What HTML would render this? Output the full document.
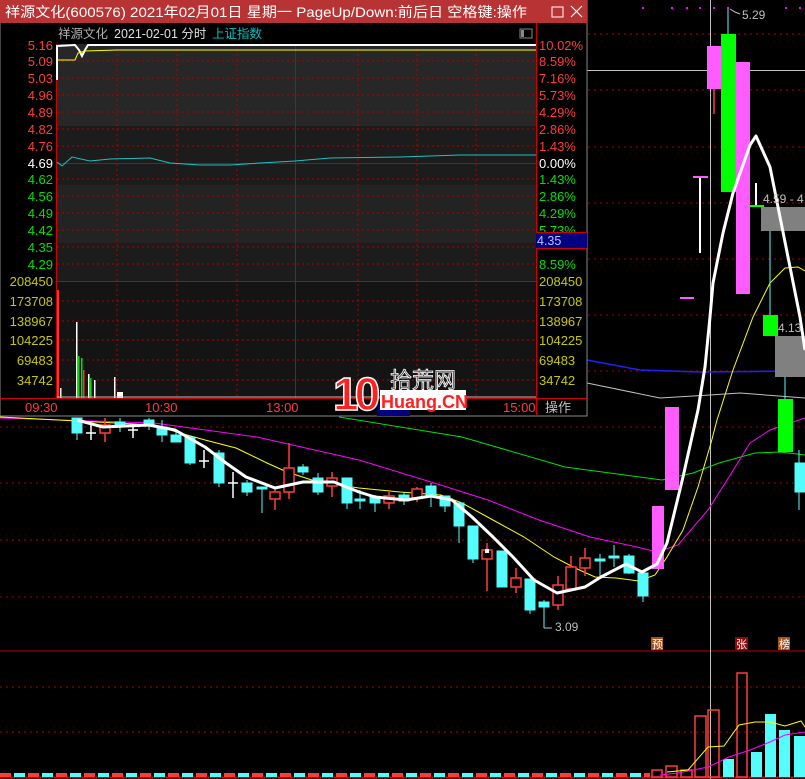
<!DOCTYPE html>
<html><head><meta charset="utf-8"><style>
html,body{margin:0;padding:0;background:#000;width:805px;height:779px;overflow:hidden}
svg{display:block}
text{font-family:"Liberation Sans","Noto Sans CJK SC",sans-serif}
</style></head><body>
<svg width="805" height="779" viewBox="0 0 805 779" xmlns="http://www.w3.org/2000/svg">
<defs>
<pattern id="vb" x="0" y="773" width="28" height="4" patternUnits="userSpaceOnUse">
<rect x="0" y="0" width="11" height="4" fill="#ff3c3c"/><rect x="14" y="0" width="11" height="4" fill="#54fcfc"/>
</pattern>
</defs>
<rect width="805" height="779" fill="#000"/>
<g stroke="#b00000" stroke-dasharray="2,4" stroke-width="1">
<line x1="0" y1="34" x2="805" y2="34"/><line x1="0" y1="90" x2="805" y2="90"/><line x1="0" y1="147" x2="805" y2="147"/>
<line x1="0" y1="203" x2="805" y2="203"/><line x1="0" y1="259" x2="805" y2="259"/><line x1="0" y1="315" x2="805" y2="315"/>
<line x1="0" y1="371" x2="805" y2="371"/><line x1="0" y1="427" x2="805" y2="427"/><line x1="0" y1="483" x2="805" y2="483"/>
<line x1="0" y1="540" x2="805" y2="540"/><line x1="0" y1="597" x2="805" y2="597"/>
<line x1="0" y1="687" x2="805" y2="687"/><line x1="0" y1="732" x2="805" y2="732"/>
</g>
<line x1="0" y1="651" x2="805" y2="651" stroke="#c00000"/>
<line x1="0" y1="777.5" x2="805" y2="777.5" stroke="#d00000" stroke-width="2"/>
<g fill="#ff00ff"><rect x="642" y="7" width="2" height="2"/><rect x="671" y="7" width="2" height="2"/><rect x="686" y="7" width="2" height="2"/><rect x="699" y="7" width="2" height="2"/><rect x="713" y="7" width="2" height="2"/><rect x="727" y="7" width="2" height="2"/><rect x="785" y="7" width="2" height="2"/><rect x="799" y="7" width="2" height="2"/></g>
<line x1="710.5" y1="0" x2="710.5" y2="779" stroke="#c0c0c0"/>
<line x1="587" y1="70.5" x2="805" y2="70.5" stroke="#c0c0c0"/>
<polyline points="587,360 640,370 700,372 805,371" fill="none" stroke="#2020ff" stroke-width="1.5"/>
<polyline points="587,383 660,398 710,395 740,393 805,398" fill="none" stroke="#c0c0c0" stroke-width="1"/>
<polyline points="339,417 462,437 565,467 662,480 693,473 719,463 755,453 780,452 805,455" fill="none" stroke="#00e000"/>
<polyline points="0,418 154,423 257,437 359,460 431,482 488,500 539,520 590,537 637,547 657,552 678,545 708,510 729,477 750,443 770,430 805,418" fill="none" stroke="#ff00ff"/>
<polyline points="0,417 154,425 180,433 205,440 236,448 267,463 287,472 318,482 359,488 400,492 441,495 462,503 493,520 524,537 554,557 575,568 595,577 616,578 639,581 655,575 667,557 683,530 698,487 711,443 717,420 733,370 753,317 770,283 785,268 798,267 805,271" fill="none" stroke="#ffff00"/>
<g stroke="#54fcfc" fill="#54fcfc">
<line x1="77" y1="418" x2="77" y2="440"/><rect x="72" y="418" width="10" height="15"/>
<line x1="120" y1="418" x2="120" y2="432"/><rect x="115" y="422" width="10" height="5"/>
<line x1="149" y1="418" x2="149" y2="430"/><rect x="144" y="420" width="10" height="5"/>
<line x1="162" y1="420" x2="162" y2="442"/><rect x="157" y="427" width="10" height="8"/>
<line x1="176" y1="432" x2="176" y2="442"/><rect x="171" y="435" width="10" height="7"/>
<line x1="190" y1="436" x2="190" y2="465"/><rect x="185" y="437" width="10" height="26"/>
<line x1="219" y1="450" x2="219" y2="487"/><rect x="214" y="453" width="10" height="30"/>
<line x1="247" y1="480" x2="247" y2="496"/><rect x="242" y="483" width="10" height="9"/>
<line x1="262" y1="487" x2="262" y2="513"/><rect x="257" y="487" width="10" height="2"/>
<line x1="303" y1="464" x2="303" y2="475"/><rect x="298" y="467" width="10" height="5"/>
<line x1="318" y1="473" x2="318" y2="495"/><rect x="313" y="478" width="10" height="14"/>
<line x1="347" y1="478" x2="347" y2="509"/><rect x="342" y="478" width="10" height="25"/>
<line x1="360" y1="490" x2="360" y2="509"/><rect x="355" y="499" width="10" height="2"/>
<line x1="375" y1="495" x2="375" y2="512"/><rect x="370" y="497" width="10" height="6"/>
<line x1="404" y1="492" x2="404" y2="505"/><rect x="399" y="495" width="10" height="6"/>
<line x1="431" y1="483" x2="431" y2="507"/><rect x="426" y="486" width="10" height="9"/>
<line x1="445" y1="496" x2="445" y2="512"/><rect x="440" y="496" width="10" height="10"/>
<line x1="459" y1="503" x2="459" y2="543"/><rect x="454" y="503" width="10" height="23"/>
<line x1="473" y1="526" x2="473" y2="563"/><rect x="468" y="526" width="10" height="33"/>
<rect x="497" y="551" width="10" height="36"/>
<line x1="530" y1="579" x2="530" y2="614"/><rect x="525" y="579" width="10" height="31"/>
<line x1="544" y1="600" x2="544" y2="628"/><rect x="539" y="602" width="10" height="5"/>
<line x1="600" y1="554" x2="600" y2="578"/><rect x="595" y="559" width="10" height="2"/>
<line x1="614" y1="545" x2="614" y2="567"/><rect x="609" y="556" width="10" height="2"/>
<line x1="629" y1="554" x2="629" y2="574"/><rect x="624" y="556" width="10" height="17"/>
<line x1="643" y1="570" x2="643" y2="602"/><rect x="638" y="573" width="10" height="23"/>
<line x1="770" y1="231" x2="770" y2="315"/><line x1="785" y1="377" x2="785" y2="399"/>
<line x1="799" y1="450" x2="799" y2="510"/><rect x="795" y="463" width="10" height="29"/>
<line x1="728" y1="9" x2="728" y2="34"/>
</g>
<g stroke="#fff" stroke-width="1.5">
<line x1="86" y1="433" x2="96" y2="433"/><line x1="91" y1="425" x2="91" y2="440"/>
<line x1="128" y1="430" x2="138" y2="430"/><line x1="133" y1="424" x2="133" y2="438"/>
<line x1="199" y1="461" x2="209" y2="461"/><line x1="204" y1="450" x2="204" y2="468"/>
<line x1="228" y1="483" x2="238" y2="483"/><line x1="233" y1="472" x2="233" y2="498"/>
</g>
<g stroke="#ff3c3c" fill="none" stroke-width="1.5">
<line x1="105" y1="418" x2="105" y2="442"/><rect x="100" y="425" width="10" height="8" fill="#000"/>
<line x1="275" y1="487" x2="275" y2="510"/><rect x="270" y="492" width="10" height="7" fill="#000"/>
<line x1="289" y1="443" x2="289" y2="499"/><rect x="284" y="468" width="10" height="24" fill="#000"/>
<line x1="332" y1="472" x2="332" y2="497"/><rect x="327" y="478" width="10" height="8" fill="#000"/>
<line x1="389" y1="492" x2="389" y2="509"/><rect x="384" y="496" width="10" height="7" fill="#000"/>
<line x1="417" y1="487" x2="417" y2="502"/><rect x="412" y="489" width="10" height="9" fill="#000"/>
<line x1="487" y1="543" x2="487" y2="591"/><rect x="482" y="550" width="10" height="9" fill="#000"/>
<line x1="516" y1="568" x2="516" y2="593"/><rect x="511" y="578" width="10" height="9" fill="#000"/>
<line x1="558" y1="576" x2="558" y2="610"/><rect x="553" y="585" width="10" height="20" fill="#000"/>
<line x1="571" y1="556" x2="571" y2="589"/><rect x="566" y="567" width="10" height="22" fill="#000"/>
<line x1="585" y1="548" x2="585" y2="576"/><rect x="580" y="558" width="10" height="10" fill="#000"/>
<line x1="714" y1="89" x2="714" y2="114"/>
</g>
<rect x="485" y="549" width="4" height="4" fill="#fff"/>
<rect x="652" y="506" width="12" height="63" fill="#ff5cff"/>
<rect x="665" y="407" width="14" height="83" fill="#ff5cff"/>
<rect x="680" y="297" width="14" height="2" fill="#ff5cff"/>
<line x1="700" y1="177" x2="700" y2="253" stroke="#fff" stroke-width="2"/><rect x="693" y="176" width="15" height="2" fill="#ff5cff"/>
<rect x="707" y="46" width="14" height="43" fill="#ff5cff"/>
<rect x="721" y="34" width="15" height="158" fill="#00ff00"/>
<rect x="736" y="62" width="14" height="232" fill="#ff5cff"/>
<line x1="756" y1="183" x2="756" y2="206" stroke="#fff" stroke-width="2"/><rect x="750" y="205" width="14" height="2" fill="#00ff00"/>
<rect x="761" y="207" width="44" height="24" fill="#808080"/>
<rect x="763" y="315" width="15" height="21" fill="#00ff00"/>
<rect x="775" y="336" width="30" height="41" fill="#808080"/>
<rect x="778" y="399" width="15" height="53" fill="#00ff00"/>
<polyline points="77,420 103,427 149,425 175,430 205,447 226,463 246,477 275,488 303,482 334,482 359,492 375,497 406,500 431,496 452,500 472,517 493,537 513,557 534,580 557,593 585,587 601,577 626,564 642,572 657,564 667,543 683,477 698,410 705,367 710,317 713,283 723,233 733,193 750,145 756,136 770,167 780,217 790,267 800,317 805,350" fill="none" stroke="#fff" stroke-width="3" stroke-linejoin="round"/>
<g font-size="12" fill="#c0c0c0">
<text x="742" y="19">5.29</text><text x="763" y="203">4.59 - 4</text><text x="778" y="332">4.13</text><text x="555" y="631">3.09</text>
</g>
<polyline points="730,9 735,12 740,14" fill="none" stroke="#c0c0c0"/><polyline points="544,628 552,628" stroke="#c0c0c0"/>
<rect x="651" y="637" width="12" height="13" fill="#a0521c"/><text x="652" y="648" font-size="11" fill="#fff">预</text>
<rect x="735" y="637" width="13" height="13" fill="#8b0a0a"/><text x="736" y="648" font-size="11" fill="#fff">张</text>
<rect x="778" y="637" width="12" height="13" fill="#a0521c"/><text x="779" y="648" font-size="11" fill="#fff">榜</text>
<rect x="0" y="773" width="650" height="4" fill="url(#vb)"/>
<g stroke="#ff3c3c" fill="none" stroke-width="1.5">
<rect x="652" y="770" width="10" height="7"/><rect x="666" y="766" width="11" height="11"/><rect x="681" y="770" width="11" height="7"/>
<rect x="695" y="716" width="11" height="61"/><rect x="708" y="710" width="11" height="67"/><rect x="737" y="673" width="10" height="104"/>
</g>
<g fill="#54fcfc"><rect x="723" y="759" width="11" height="18"/><rect x="751" y="752" width="11" height="25"/><rect x="765" y="714" width="11" height="63"/><rect x="779" y="730" width="11" height="47"/><rect x="794" y="736" width="11" height="41"/></g>
<polyline points="667,772 688,770 708,747 724,746 739,725 755,722 770,722 785,726 801,721 805,727" fill="none" stroke="#ffff00"/>
<polyline points="660,775 678,773 708,767 729,757 750,750 770,742 785,735 805,732" fill="none" stroke="#ff00ff"/>

<rect x="0" y="0" width="587" height="416" fill="#000" stroke="#888"/>
<rect x="0" y="0" width="587" height="23" fill="#b83434"/>
<text x="5" y="17" font-size="14" fill="#fff" textLength="522" lengthAdjust="spacingAndGlyphs">祥源文化(600576) 2021年02月01日 星期一 PageUp/Down:前后日 空格键:操作</text>
<rect x="552" y="7" width="11" height="10" fill="none" stroke="#fff"/>
<path d="M571 6 L582 17 M582 6 L571 17" stroke="#fff" stroke-width="1.2"/>
<text x="58" y="38" font-size="12.5" fill="#b0b0b0">祥源文化</text>
<text x="114" y="38" font-size="12.5" fill="#e0e0e0">2021-02-01 分时</text>
<text x="212" y="38" font-size="12.5" fill="#00c0c0">上证指数</text>
<rect x="520" y="29" width="12" height="9" fill="none" stroke="#888"/><rect x="521" y="30" width="3" height="7" fill="#888"/>
<rect x="57" y="44" width="479" height="237" fill="#1c1c1c"/>
<rect x="57" y="44" width="479" height="82" fill="#272727"/>
<rect x="57" y="185" width="479" height="58" fill="#232323"/>
<rect x="57" y="282" width="479" height="116" fill="#141414"/>
<g stroke="#b00000" stroke-dasharray="2,3">
<line x1="57" y1="61" x2="536" y2="61"/><line x1="57" y1="78" x2="536" y2="78"/><line x1="57" y1="95" x2="536" y2="95"/>
<line x1="57" y1="112" x2="536" y2="112"/><line x1="57" y1="129" x2="536" y2="129"/><line x1="57" y1="146" x2="536" y2="146"/>
<line x1="57" y1="179" x2="536" y2="179"/><line x1="57" y1="196" x2="536" y2="196"/><line x1="57" y1="213" x2="536" y2="213"/>
<line x1="57" y1="230" x2="536" y2="230"/><line x1="57" y1="247" x2="536" y2="247"/><line x1="57" y1="264" x2="536" y2="264"/>
<line x1="57" y1="301" x2="536" y2="301"/><line x1="57" y1="321" x2="536" y2="321"/><line x1="57" y1="340" x2="536" y2="340"/>
<line x1="57" y1="360" x2="536" y2="360"/><line x1="57" y1="380" x2="536" y2="380"/>
<line x1="117" y1="44" x2="117" y2="398"/><line x1="177" y1="44" x2="177" y2="398"/><line x1="237" y1="44" x2="237" y2="398"/>
<line x1="358" y1="44" x2="358" y2="398"/><line x1="417" y1="44" x2="417" y2="398"/><line x1="476" y1="44" x2="476" y2="398"/>
</g>
<line x1="57" y1="163.5" x2="536" y2="163.5" stroke="#c00000"/>
<line x1="57" y1="281.5" x2="536" y2="281.5" stroke="#c00000"/>
<line x1="295.5" y1="44" x2="295.5" y2="398" stroke="#c00000"/>
<line x1="56.5" y1="44" x2="56.5" y2="398" stroke="#d00000"/>
<line x1="536.5" y1="23" x2="536.5" y2="416" stroke="#d00000"/>
<line x1="0" y1="398.5" x2="587" y2="398.5" stroke="#d00000"/>
<polyline points="57,80 57,46 75,45 79,50 82,56 85,50 88,45 536,45" fill="none" stroke="#fff" stroke-width="2"/>
<polyline points="57,60 75,60 78,53 85,51 117,50 536,50" fill="none" stroke="#ffff00"/>
<polyline points="57,162 62,166 72,157 90,161 110,159 150,158 170,163 200,165 230,165 260,163 295,161 330,158 400,157 460,155 536,155" fill="none" stroke="#20c0c0"/>
<rect x="57" y="290" width="2" height="108" fill="#ff3030"/>
<rect x="76" y="322" width="1.5" height="76" fill="#fff"/>
<rect x="78" y="356" width="1.5" height="42" fill="#00e000"/><rect x="81" y="358" width="1.5" height="40" fill="#00e000"/>
<rect x="83" y="370" width="1.5" height="28" fill="#ff3030"/><rect x="88" y="374" width="1.5" height="24" fill="#fff"/>
<rect x="90" y="378" width="1.5" height="20" fill="#00e000"/><rect x="94" y="380" width="1.5" height="18" fill="#fff"/>
<rect x="114" y="377" width="1.5" height="21" fill="#fff"/><rect x="60" y="388" width="1.5" height="10" fill="#fff"/>
<rect x="117" y="392" width="6" height="6" fill="#fff"/>
<rect x="57" y="396" width="479" height="2" fill="#bbb" opacity="0.5"/>
<g font-size="13" text-anchor="end">
<g fill="#ff3c3c"><text x="53" y="50">5.16</text><text x="53" y="66">5.09</text><text x="53" y="83">5.03</text><text x="53" y="100">4.96</text><text x="53" y="117">4.89</text><text x="53" y="134">4.82</text><text x="53" y="151">4.76</text></g>
<text x="53" y="168" fill="#fff">4.69</text>
<g fill="#00e000"><text x="53" y="184">4.62</text><text x="53" y="201">4.56</text><text x="53" y="218">4.49</text><text x="53" y="235">4.42</text><text x="53" y="252">4.35</text><text x="53" y="269">4.29</text></g>
<g fill="#c8c800"><text x="53" y="286">208450</text><text x="53" y="306">173708</text><text x="53" y="326">138967</text><text x="53" y="345">104225</text><text x="53" y="365">69483</text><text x="53" y="385">34742</text></g>
</g>
<g font-size="13">
<g fill="#ff3c3c"><text x="539" y="50">10.02%</text><text x="539" y="66">8.59%</text><text x="539" y="83">7.16%</text><text x="539" y="100">5.73%</text><text x="539" y="117">4.29%</text><text x="539" y="134">2.86%</text><text x="539" y="151">1.43%</text></g>
<text x="539" y="168" fill="#fff">0.00%</text>
<g fill="#00e000"><text x="539" y="184">1.43%</text><text x="539" y="201">2.86%</text><text x="539" y="218">4.29%</text><text x="539" y="235">5.73%</text><text x="539" y="269">8.59%</text></g>
<g fill="#c8c800"><text x="539" y="286">208450</text><text x="539" y="306">173708</text><text x="539" y="326">138967</text><text x="539" y="345">104225</text><text x="539" y="365">69483</text><text x="539" y="385">34742</text></g>
</g>
<rect x="536" y="233" width="51" height="15" fill="#000080"/>
<line x1="536" y1="232.5" x2="587" y2="232.5" stroke="#d00000"/><line x1="536" y1="248.5" x2="587" y2="248.5" stroke="#d00000"/>
<text x="537" y="245" font-size="12.5" fill="#c0c0ff">4.35</text>
<g font-size="13" fill="#ff3c3c"><text x="25" y="412">09:30</text><text x="145" y="412">10:30</text><text x="266" y="412">13:00</text><text x="503" y="412">15:00</text></g>
<text x="545" y="412" font-size="13" fill="#c0c0c0">操作</text>
<rect x="377" y="403" width="33" height="13" fill="#000080"/>
<text x="333" y="410" font-size="46" font-weight="bold" fill="#ff2020" stroke="#fff" stroke-width="1.5" letter-spacing="-4">10</text>
<text x="390" y="388" font-size="22" fill="#333" stroke="#fff" stroke-width="0.8">拾荒网</text>
<rect x="380" y="390" width="86" height="20" fill="#fff"/>
<text x="381" y="408" font-size="18" font-weight="bold" fill="#ff2020">Huang.CN</text>
</svg>
</body></html>
